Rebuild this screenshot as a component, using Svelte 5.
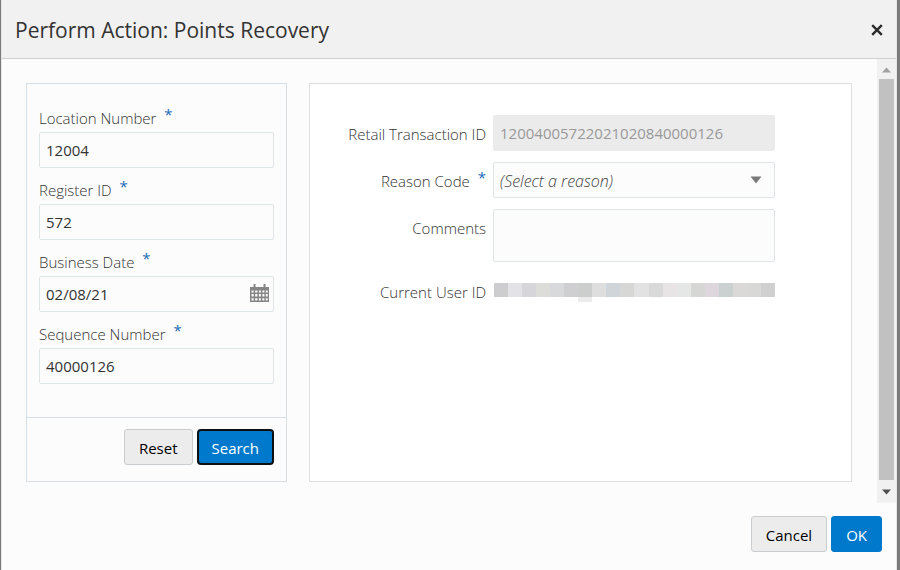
<script>
	let location = $state('12004');
	let register = $state('572');
	let businessDate = $state('02/08/21');
	let sequence = $state('40000126');
	let reason = $state('');
	let comments = $state('');
	const transactionId = '12004005722021020840000126';
	const maskColors = ['#cdcdcf', '#e2e2e7', '#d6d6da', '#dcddd8', '#d7d9db', '#cfcfd1', '#cccece', '#dedede', '#d0d5d9', '#d7d7d5', '#e2e2e2', '#d8d9d8', '#e8e3e4', '#e5e6e6', '#d6d6d5', '#ddd6dc', '#cbd0d1', '#dad9d8', '#d8d8d6', '#d0d0d0'];

	function reset() {
		location = '';
		register = '';
		businessDate = '';
		sequence = '';
	}
</script>

<div class="backdrop">
	<div class="dialog" role="dialog" aria-labelledby="title">
		<header>
			<h1 id="title">Perform Action: Points Recovery</h1>
			<button class="close" type="button" aria-label="Close">
				<svg width="12" height="12" viewBox="0 0 12 12"><path d="M1.2 1.2l9.6 9.6M10.8 1.2l-9.6 9.6" stroke="#2b2b2b" stroke-width="2.4" /></svg>
			</button>
		</header>

		<div class="body">
			<div class="content">
				<form class="panel search">
					<div class="fields">
						<div class="field">
							<label for="location">Location Number <span class="req">*</span></label>
							<input id="location" bind:value={location} />
						</div>
						<div class="field">
							<label for="register">Register ID <span class="req">*</span></label>
							<input id="register" bind:value={register} />
						</div>
						<div class="field">
							<label for="date">Business Date <span class="req">*</span></label>
							<div class="date">
								<input id="date" bind:value={businessDate} />
								<button class="calendar" type="button" aria-label="Select date">
									<svg width="19" height="19" viewBox="0 0 19 19">
										<path d="M0 3h19v15H0z" fill="#858585" />
										<path d="M3.5 0h2v4h-2zM13.5 0h2v4h-2z" fill="#858585" />
										<path d="M1.5 6.5h2.2v2H1.5zM5.2 6.5h2.2v2H5.2zM8.9 6.5h2v2h-2zM12.4 6.5h2v2h-2zM15.8 6.5h1.9v2h-1.9zM1.5 10h2.2v2.6H1.5zM5.2 10h2.2v2.6H5.2zM8.9 10h2v2.6h-2zM12.4 10h2v2.6h-2zM15.8 10h1.9v2.6h-1.9zM1.5 14.2h2.2v2.3H1.5zM5.2 14.2h2.2v2.3H5.2zM8.9 14.2h2v2.3h-2zM12.4 14.2h2v2.3h-2zM15.8 14.2h1.9v2.3h-1.9z" fill="#fcfcfc" />
									</svg>
								</button>
							</div>
						</div>
						<div class="field">
							<label for="sequence">Sequence Number <span class="req">*</span></label>
							<input id="sequence" bind:value={sequence} />
						</div>
					</div>
					<div class="actions">
						<button class="btn" type="button" onclick={reset}>Reset</button>
						<button class="btn primary focused" type="button">Search</button>
					</div>
				</form>

				<form class="panel details">
					<label for="transaction">Retail Transaction ID</label>
					<input id="transaction" value={transactionId} disabled />
					<label for="reason">Reason Code <span class="req">*</span></label>
					<div class="select">
						<select id="reason" bind:value={reason}>
							<option value="">(Select a reason)</option>
						</select>
						<svg width="12" height="8" viewBox="0 0 12 8"><path d="M0.5 0.5h11L6 7.5z" fill="#7a7a7a" /></svg>
					</div>
					<label for="comments">Comments</label>
					<textarea id="comments" bind:value={comments}></textarea>
					<span class="label">Current User ID</span>
					<div class="mask">
						{#each maskColors as color, i}
							<i class:descender={i === 6} style="background: {color}"></i>
						{/each}
					</div>
				</form>
			</div>
			<div class="scrollbar" aria-hidden="true">
				<svg width="9" height="6" viewBox="0 0 9 6"><path d="M0 5.5L4.5 0.5 9 5.5z" fill="#a0a0a0" /></svg>
				<div class="thumb"></div>
				<svg width="9" height="6" viewBox="0 0 9 6"><path d="M0 0.5L4.5 5.5 9 0.5z" fill="#505050" /></svg>
			</div>
		</div>

		<footer>
			<button class="btn" type="button">Cancel</button>
			<button class="btn primary" type="button">OK</button>
		</footer>
	</div>
</div>

<style>
	.backdrop {
		min-height: 100vh;
		box-sizing: border-box;
		padding: 0 3px 0 1px;
		background: #7b7b7b;
		display: flex;
		font: 15px/20px "Open Sans", "Noto Sans", sans-serif;
		color: #333;
	}
	.dialog {
		flex: 1;
		display: flex;
		flex-direction: column;
		background: #fcfcfc;
		border: solid #e4e4e4;
		border-width: 0 1px;
	}
	header {
		display: flex;
		align-items: center;
		justify-content: space-between;
		height: 58px;
		padding: 0 13px;
		background: #f1f1f1;
		border-bottom: 1px solid #cfd0d2;
	}
	h1 {
		margin: 0;
		padding-top: 2px;
		font-size: 21px;
		line-height: 28px;
		font-weight: 400;
		color: #333;
	}
	button, input, select, textarea {
		font: inherit;
		box-sizing: border-box;
		margin: 0;
	}
	.close, .calendar {
		display: flex;
		padding: 0;
		border: 0;
		background: none;
	}
	.close {
		padding-top: 2px;
	}
	.body {
		flex: 1;
		display: flex;
	}
	.content {
		flex: 1;
		display: flex;
		gap: 22px;
		padding: 24px 25px 21px 24px;
	}
	.panel {
		box-sizing: border-box;
		border: 1px solid #d6dfe6;
	}
	.search {
		width: 261px;
		display: flex;
		flex-direction: column;
	}
	.fields {
		flex: 1;
		display: flex;
		flex-direction: column;
		gap: 12px;
		padding: 24px 12px 33px;
	}
	.field {
		display: flex;
		flex-direction: column;
		gap: 4px;
	}
	label, .label {
		font-weight: 300;
		color: #333;
	}
	.req {
		color: #1b6bb5;
		font-size: 15px;
		font-weight: 400;
		line-height: 0;
		vertical-align: 4px;
		margin-left: 4px;
	}
	input, select, textarea {
		display: block;
		width: 100%;
		height: 36px;
		padding: 0 6px;
		border: 1px solid #dfe4e7;
		border-radius: 2px;
		background: #fcfcfc;
		color: #333;
	}
	.date, .select {
		position: relative;
	}
	.calendar {
		position: absolute;
		right: 5px;
		top: 8px;
	}
	.actions {
		display: flex;
		justify-content: flex-end;
		gap: 4px;
		padding: 11px 12px 16px;
		border-top: 1px solid #d6dfe6;
	}
	.btn {
		height: 36px;
		padding: 2px 14px 0;
		border: 1px solid #c9cdd0;
		border-radius: 3px;
		background: #ececec;
		color: #000;
	}
	.primary {
		background: #0079cd;
		border-color: #0079cd;
		color: #fff;
	}
	.focused {
		padding: 2px 13px 0;
		border: 2px solid #101010;
		border-radius: 4px;
	}
	.details {
		flex: 1;
		display: grid;
		grid-template-columns: 176px 282px;
		gap: 11px 7px;
		align-content: start;
		padding-top: 31px;
		background: #fff;
		border-color: #dcdfe2;
	}
	.details label, .label {
		text-align: right;
		line-height: 38px;
		height: 36px;
	}
	.details input:disabled {
		background: #ebebeb;
		border-color: #ebebeb;
		color: #999;
	}
	select {
		appearance: none;
		padding-top: 2px;
		font-size: 16px;
		font-style: italic;
		font-weight: 300;
		color: #444;
	}
	.select svg {
		position: absolute;
		right: 13px;
		top: 14px;
	}
	textarea {
		height: 53px;
		resize: none;
	}
	.mask {
		display: flex;
		align-self: start;
		height: 14px;
		margin: 10px 0 0 1px;
	}
	.mask i {
		flex: 1;
	}
	.mask .descender {
		box-shadow: 0 5px #ececec;
	}
	.scrollbar {
		width: 19px;
		display: flex;
		flex-direction: column;
		align-items: center;
		gap: 6px;
		padding: 8px 0;
		box-sizing: border-box;
		background: #f1f1f1;
	}
	.thumb {
		flex: 1;
		width: 15px;
		margin-bottom: 3px;
		background: #c1c1c1;
	}
	footer {
		display: flex;
		justify-content: flex-end;
		gap: 4px;
		padding: 13px 14px 18px;
	}
</style>
